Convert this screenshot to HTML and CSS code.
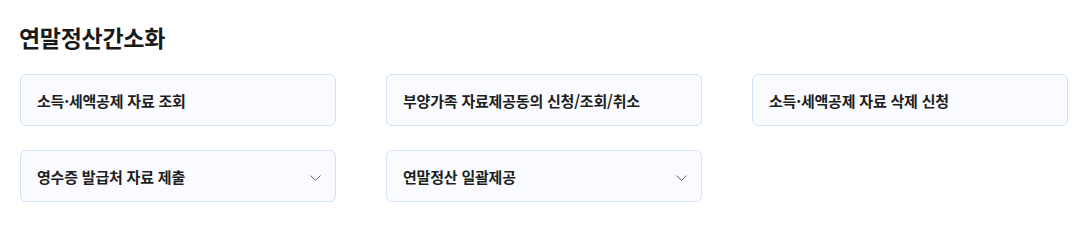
FILE: index.html
```html
<!DOCTYPE html>
<html lang="ko">
<head>
<meta charset="utf-8">
<link rel="stylesheet" href="styles.css">
</head>
<body>
<section class="panel">
  <h2 class="title">연말정산간소화</h2>
  <div class="grid">
    <a class="card">소득·세액공제 자료 조회</a>
    <a class="card">부양가족 자료제공동의 신청/조회/취소</a>
    <a class="card">소득·세액공제 자료 삭제 신청</a>
    <a class="card has-sub">영수증 발급처 자료 제출
      <svg class="chev" width="11" height="6" viewBox="0 0 11 6"><path d="M0.5 0.5 L5.5 5.5 L10.5 0.5" fill="none" stroke="#666" stroke-width="1"/></svg>
    </a>
    <a class="card has-sub">연말정산 일괄제공
      <svg class="chev" width="11" height="6" viewBox="0 0 11 6"><path d="M0.5 0.5 L5.5 5.5 L10.5 0.5" fill="none" stroke="#666" stroke-width="1"/></svg>
    </a>
  </div>
</section>
</body>
</html>
```

FILE: styles.css
```css
* { box-sizing: border-box; }
html, body { margin: 0; padding: 0; background: #fff; }
body {
  font-family: "Noto Sans CJK KR", "Noto Sans", sans-serif;
  color: #222;
}
.panel {
  padding: 19px 16px 0 20px;
  width: 1084px;
}
.title {
  margin: 0 0 0 -1px;
  font-size: 23px;
  font-weight: 700;
  line-height: 36px;
  color: #1a1a1a;
  letter-spacing: -0.3px;
}
.grid {
  margin-top: 19px;
  display: grid;
  grid-template-columns: repeat(3, 316px);
  column-gap: 50px;
  row-gap: 24px;
}
.card {
  height: 52px;
  display: flex;
  align-items: center;
  justify-content: space-between;
  padding: 0 14px 0 16px;
  border: 1px solid #d3e0fa;
  border-radius: 6px;
  background: #f9fbff;
  font-size: 15px;
  font-weight: 600;
  color: #1e1e1e;
  letter-spacing: -0.2px;
  text-decoration: none;
}
.chev { display: block; margin-top: 3px; }
```
